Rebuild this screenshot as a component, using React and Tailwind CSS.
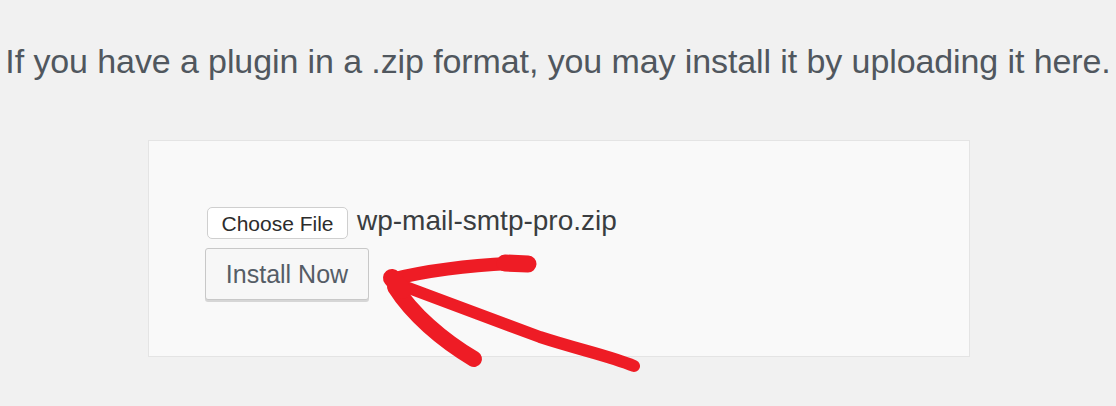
export default function App() {
  return (
    <div
      className="relative w-[1116px] h-[406px] bg-[#f1f1f1] overflow-hidden"
      style={{ fontFamily: '"Liberation Sans", Arial, sans-serif' }}
    >
      <p className="pt-[41px] text-center text-[34px] leading-[40px] text-[#50575e] tracking-[-0.1px] whitespace-nowrap">
        If you have a plugin in a .zip format, you may install it by uploading it here.
      </p>

      <div className="ml-[148px] mt-[59px] w-[822px] h-[217px] bg-[#f9f9f9] border border-[#e4e4e4] pl-[58px] pt-[66px]">
        <div className="flex items-center gap-[9px]">
          <button className="h-[32px] w-[141px] bg-white border border-[#cfcfcf] rounded-[5px] text-[21px] text-[#2c2c2c] leading-none">
            Choose File
          </button>
          <span className="text-[28px] text-[#3a3d40] leading-none -mt-[4px]">wp-mail-smtp-pro.zip</span>
        </div>
        <button className="mt-[9px] -ml-[2px] w-[164px] h-[52px] bg-[#f7f7f7] border border-[#c8c8c8] rounded-[3px] shadow-[0_2px_0_#d6d6d6] text-[25px] text-[#555d66] leading-none">
          Install Now
        </button>
      </div>

      <svg
        className="absolute top-0 left-0 pointer-events-none"
        width="1116"
        height="406"
        viewBox="0 0 1116 406"
      >
        <g fill="none" stroke="#ee1c25" strokeLinecap="round" strokeLinejoin="round">
          <path d="M393 279 C 430 270, 470 265, 518 263" strokeWidth="13" />
          <path d="M505 263 L 528 264" strokeWidth="17" />
          <path d="M398 284 C 440 300, 490 318, 540 337 C 580 350, 610 356, 634 366" strokeWidth="12" />
          <path d="M395 287 C 412 314, 442 340, 474 359" strokeWidth="16" />
          <path d="M392 278 L 402 290" strokeWidth="18" />
        </g>
      </svg>
    </div>
  );
}
